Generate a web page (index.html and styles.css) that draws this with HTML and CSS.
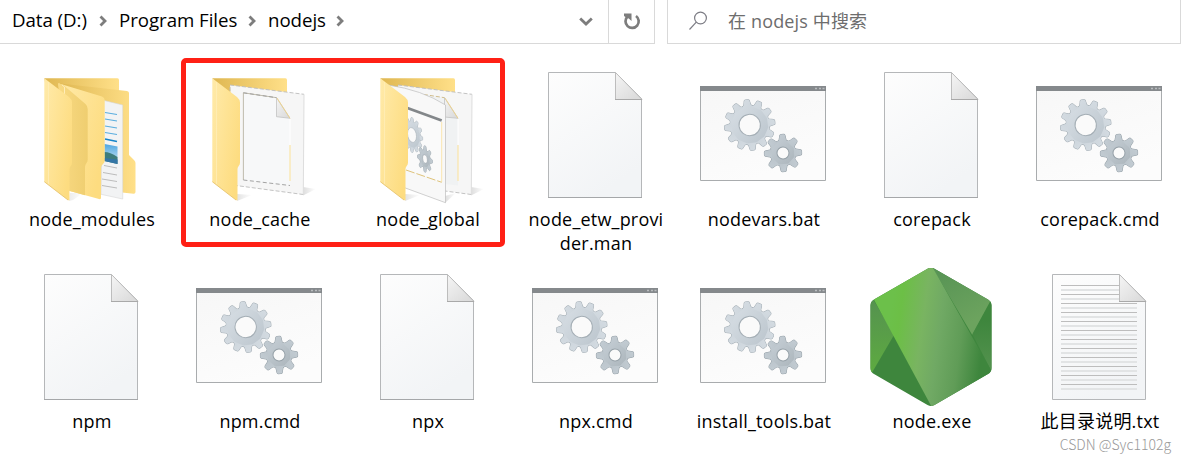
FILE: index.html
```html
<!DOCTYPE html>
<html lang="zh-CN">
<head>
    <meta charset="UTF-8">
    <meta name="viewport" content="width=device-width, initial-scale=1.0">
    <title>nodejs</title>
    <link rel="stylesheet" href="styles.css">
</head>
<body>

    <!-- shared icons -->
    <svg class="defs" width="0" height="0">
        <defs>
            <linearGradient id="paper" x1="0" y1="0" x2="0.5" y2="1">
                <stop offset="0" stop-color="#fdfdfd"/>
                <stop offset="1" stop-color="#f2f4f6"/>
            </linearGradient>
            <linearGradient id="fold" x1="0" y1="0.2" x2="0.7" y2="1">
                <stop offset="0" stop-color="#f2f2f2"/>
                <stop offset="1" stop-color="#dcdcdc"/>
            </linearGradient>
            <linearGradient id="win" x1="0" y1="0" x2="0.4" y2="1">
                <stop offset="0" stop-color="#f7f7f7"/>
                <stop offset="1" stop-color="#fcfcfc"/>
            </linearGradient>
            <linearGradient id="metal" gradientUnits="userSpaceOnUse" x1="-20" y1="-20" x2="20" y2="20">
                <stop offset="0" stop-color="#d8dfe5"/>
                <stop offset="1" stop-color="#bac4cc"/>
            </linearGradient>
            <linearGradient id="metalDark" gradientUnits="userSpaceOnUse" x1="-14" y1="-14" x2="14" y2="14">
                <stop offset="0" stop-color="#c6cfd6"/>
                <stop offset="1" stop-color="#a9b3b9"/>
            </linearGradient>
            <linearGradient id="cover" x1="0" y1="0" x2="1" y2="0.6">
                <stop offset="0" stop-color="#ffeaa9"/>
                <stop offset="1" stop-color="#fddc80"/>
            </linearGradient>
            <linearGradient id="back" x1="0" y1="0" x2="1" y2="0">
                <stop offset="0" stop-color="#dfb751"/>
                <stop offset="1" stop-color="#ffe089"/>
            </linearGradient>
            <linearGradient id="inner" x1="0" y1="0" x2="1" y2="0">
                <stop offset="0" stop-color="#f9da84"/>
                <stop offset="1" stop-color="#efce70"/>
            </linearGradient>
            <linearGradient id="sky" x1="0" y1="0" x2="0" y2="1">
                <stop offset="0" stop-color="#4ea6e0"/>
                <stop offset="1" stop-color="#d7ecf6"/>
            </linearGradient>
            <linearGradient id="shade" x1="0" y1="0" x2="1" y2="0">
                <stop offset="0" stop-color="#cfcfcf"/>
                <stop offset="1" stop-color="#fff"/>
            </linearGradient>
            <linearGradient id="band" gradientUnits="userSpaceOnUse" x1="26" y1="62" x2="143" y2="78">
                <stop offset="0.12" stop-color="#6cc04a"/>
                <stop offset="0.2" stop-color="#6cbf46"/>
                <stop offset="0.4" stop-color="#79b461"/>
                <stop offset="0.55" stop-color="#70a964"/>
                <stop offset="0.74" stop-color="#609c57"/>
                <stop offset="0.93" stop-color="#3e863d"/>
            </linearGradient>
            <linearGradient id="hexLeft" x1="0" y1="0" x2="0" y2="1">
                <stop offset="0.1" stop-color="#55934f"/>
                <stop offset="0.9" stop-color="#5da941"/>
            </linearGradient>
            <linearGradient id="hexTop" x1="0" y1="0" x2="0.5" y2="1">
                <stop offset="0.1" stop-color="#589455"/>
                <stop offset="0.9" stop-color="#6ca35e"/>
            </linearGradient>
            <linearGradient id="hexRight" x1="0" y1="0" x2="0" y2="1">
                <stop offset="0.3" stop-color="#3e863d"/>
                <stop offset="1" stop-color="#55934f"/>
            </linearGradient>
            <clipPath id="hex">
                <path d="M79.5 0.7Q83 -1.3 86.500 0.7L140 31.500Q143.500 33.500 143.500 37.500V100Q143.500 104 140 106L86.500 137Q83 139 79.500 137L26 106Q22.500 104 22.500 100V37.500Q22.500 33.500 26 31.500Z"/>
            </clipPath>

            <path id="tooth" d="M-5.800 -18L-3.500 -20L-2.600 -24.300Q-2.300 -25.300 -1.300 -25.300H1.300Q2.300 -25.300 2.600 -24.300L3.500 -20L5.800 -18Z"/>
            <g id="bigGear">
                <circle r="19.300"/>
                <use href="#tooth"/>
                <use href="#tooth" transform="rotate(30)"/>
                <use href="#tooth" transform="rotate(60)"/>
                <use href="#tooth" transform="rotate(90)"/>
                <use href="#tooth" transform="rotate(120)"/>
                <use href="#tooth" transform="rotate(150)"/>
                <use href="#tooth" transform="rotate(180)"/>
                <use href="#tooth" transform="rotate(210)"/>
                <use href="#tooth" transform="rotate(240)"/>
                <use href="#tooth" transform="rotate(270)"/>
                <use href="#tooth" transform="rotate(300)"/>
                <use href="#tooth" transform="rotate(330)"/>
            </g>
            <path id="smallTooth" d="M-5.500 -11L-3.500 -13L-2.600 -17.600Q-2.300 -18.600 -1.300 -18.600H1.300Q2.300 -18.600 2.600 -17.600L3.500 -13L5.500 -11Z"/>
            <g id="smallGear">
                <circle r="12.500"/>
                <use href="#smallTooth"/>
                <use href="#smallTooth" transform="rotate(45)"/>
                <use href="#smallTooth" transform="rotate(90)"/>
                <use href="#smallTooth" transform="rotate(135)"/>
                <use href="#smallTooth" transform="rotate(180)"/>
                <use href="#smallTooth" transform="rotate(225)"/>
                <use href="#smallTooth" transform="rotate(270)"/>
                <use href="#smallTooth" transform="rotate(315)"/>
            </g>
            <g id="gearA">
                <use href="#bigGear" fill="#9fa9b0" stroke="#a4aeb5" stroke-width="1"/>
                <use href="#bigGear" fill="url(#metal)"/>
                <circle r="10.700" fill="#fafafa" stroke="#a4aeb5"/>
            </g>
            <g id="gearB">
                <use href="#smallGear" fill="#9fa9b0" stroke="#96a1a8" stroke-width="1"/>
                <use href="#smallGear" fill="url(#metalDark)"/>
                <circle r="6" fill="#fafafa" stroke="#96a1a8"/>
            </g>

            <symbol id="file" viewBox="0 0 168 140">
                <path d="M36.500 6.500H103.500L129.500 32.500V131.500H36.500Z" fill="url(#paper)" stroke="#b5b7b9"/>
                <path d="M36 131.500H130" stroke="#a5a7a9"/>
                <path d="M103.500 6.500V33.500H130Z" fill="url(#fold)" stroke="#bdbdbd"/>
                <path d="M103 33.500H130" stroke="#a9a9a9"/>
            </symbol>

            <symbol id="script" viewBox="0 0 168 140">
                <path d="M20.500 20.500H145.500V114.500H20.500Z" fill="url(#win)" stroke="#a9acae"/>
                <path d="M20 20H146V25H20Z" fill="#85898c"/>
                <path d="M135 22.500H137M139 22.500H141M142.500 22.500H144.500" stroke="#b9bcbe" stroke-width="1.500"/>
                <use href="#gearA" transform="translate(69.700 59) rotate(-7)"/>
                <use href="#gearB" transform="translate(103 87) rotate(-2)"/>
            </symbol>

            <g id="folderCover">
                <path d="M36.300 12.300L61 31Q64 33.500 64 36.500V96.500Q64 98.500 62.700 100Q61.500 101.500 61.500 103V133.500Q61.500 135 60 134L36.300 115.700Z" fill="url(#cover)"/>
                <path d="M40.500 16V118.500" stroke="#ffedb8" stroke-width="0.800"/>
                <path d="M36.300 115.700L60 134" stroke="#e3bf67" stroke-width="0.800"/>
            </g>
        </defs>
    </svg>

    <header class="toolbar">
        <div class="address">
            <span class="crumb">Data (D:)</span>
            <svg class="arrow" width="8" height="12" viewBox="0 0 8 12"><path d="M1.500 1.500L6 6L1.500 10.500"/></svg>
            <span class="crumb crumb-parent">Program Files</span>
            <svg class="arrow" width="8" height="12" viewBox="0 0 8 12"><path d="M1.500 1.500L6 6L1.500 10.500"/></svg>
            <span class="crumb crumb-current">nodejs</span>
            <svg class="arrow" width="8" height="12" viewBox="0 0 8 12"><path d="M1.500 1.500L6 6L1.500 10.500"/></svg>
            <svg class="arrow dropdown" width="14" height="10" viewBox="0 0 14 10"><path d="M1.200 2.500L7 8L12.800 2.500"/></svg>
        </div>
        <div class="refresh">
            <svg width="18" height="18" viewBox="0 0 18 18">
                <path d="M13 4A6.600 6.600 0 1 1 4.600 4.500" fill="none" stroke="#7d7d7d" stroke-width="2.700"/>
                <path d="M1 1.500H8.500V9L5.800 6.500L3.500 5.800L1 4Z" fill="#7d7d7d"/>
            </svg>
        </div>
        <div class="search">
            <svg width="20" height="20" viewBox="0 0 20 20" fill="none" stroke="#7c7c84" stroke-width="1.200">
                <circle cx="12.500" cy="7" r="5.900"/>
                <path d="M8.300 11.200L1.500 18.500"/>
            </svg>
            <span class="search-text">在 nodejs 中搜索</span>
        </div>
    </header>

    <main class="files">
        <div class="item">
            <svg class="icon" viewBox="0 0 168 140">
                <path d="M36.300 12.300H109.500Q111 12.300 111 14V90H50Z" fill="url(#back)"/>
                <path d="M50 17.300L119 25Q121 25.300 121 27V89L126 94Q127.500 95.500 127.500 97V126Q127.500 128 125.500 127.800L112 126.300L60 110Z" fill="url(#back)"/>
                <path d="M94 34L114.700 39V133L93 128.300Z" fill="#f2f3f4" stroke="#d6d6d6" stroke-width="0.600"/>
                <path d="M97 46.500L109 48.500M97 53L109 55M97 60L109 62M97 66.500L109 68.500" stroke="#5aaede" stroke-width="1.200"/>
                <path d="M97 73L109 75.500" stroke="#1684c8" stroke-width="1.700"/>
                <path d="M96.500 78L109.500 80.500V98L96.500 95Z" fill="url(#sky)"/>
                <path d="M96.500 86Q102 86 109.500 91V98L96.500 95Z" fill="#3e7d7c"/>
                <path d="M96.500 92L109.500 93.500V98L96.500 95Z" fill="#3475a5"/>
                <path d="M96 99.500L109 102M95 106.500L109 109M94 113L109 115.500M94 119.500L109 122" stroke="#b5b5b5" stroke-width="0.900"/>
                <path d="M62 127H75L65 134L61 135Z" fill="url(#shade)" opacity="0.4"/>
                <path d="M50.300 17.300L94 30.500Q96.700 31.500 96.700 34V95Q96.700 96.500 95 98Q93 99.500 93 101.500V132Q93 133.500 91 133L60 124.500Z" fill="url(#cover)"/>
                <path d="M50.300 17.300L55 18.700L77.500 38Q79.700 40 79.700 43V93.500Q79.700 95.500 78.500 97Q77 99 77 101V129.300L60 124.500Z" fill="url(#inner)"/>
                <path d="M54 19L56.500 21V30" fill="none" stroke="#ffedb8"/>
                <use href="#folderCover"/>
            </svg>
            <span class="name">node_modules</span>
        </div>
        <div class="item">
            <svg class="icon" viewBox="0 0 168 140">
                <path d="M127 121L140 123L127 129.500Z" fill="url(#shade)" opacity="0.700"/>
                <path d="M61 128L76 129L61 135Z" fill="url(#shade)" opacity="0.600"/>
                <path d="M36.300 12.300H109.500Q111 12.300 111 14V50H60Z" fill="url(#back)"/>
                <path d="M54 19L128 28.300L127.300 128.500L60 119.500Z" fill="#f6f6f6"/>
                <path d="M54 31V19L128 28.300M127.300 128.500L60 119.500" fill="none" stroke="#bcbcbc" stroke-width="0.900" stroke-dasharray="4 2"/>
                <path d="M128 28.300L127.300 128.500" stroke="#dedede"/>
                <path d="M67.400 26.800L100.500 31.700L114 52.300V119.500L67.400 114Z" fill="#f7f8f9"/>
                <path d="M67.400 114V26.800L100.500 31.700" fill="none" stroke="#b9b4a4" stroke-width="0.900"/>
                <path d="M67.400 26.800L100.500 31.700M67.400 114L114 119.500" fill="none" stroke="#999" stroke-width="0.900" stroke-dasharray="4 2.500"/>
                <path d="M114 52.300V79" stroke="#fff"/>
                <path d="M114 79V115" stroke="#fbe3a0" stroke-width="1.100"/>
                <path d="M100.500 31.700V50.700L114 52.300Z" fill="url(#fold)" stroke="#bbb" stroke-width="0.700"/>
                <path d="M101 32L114 52.300" stroke="#efd387" stroke-width="0.900"/>
                <use href="#folderCover"/>
            </svg>
            <span class="name">node_cache</span>
        </div>
        <div class="item">
            <svg class="icon" viewBox="0 0 168 140">
                <path d="M127 121L140 123L127 129.500Z" fill="url(#shade)" opacity="0.700"/>
                <path d="M101 130L112 127L101 137Z" fill="url(#shade)" opacity="0.700"/>
                <path d="M61 128L76 129L61 135Z" fill="url(#shade)" opacity="0.600"/>
                <path d="M36.300 12.300H109.500Q111 12.300 111 14V50H60Z" fill="url(#back)"/>
                <path d="M54 19L128 28.300L127.300 128.500L60 119.500Z" fill="#f6f6f6"/>
                <path d="M54 19L128 28.300M127.300 128.500L101 125" fill="none" stroke="#bcbcbc" stroke-width="0.900" stroke-dasharray="4 2"/>
                <path d="M128 28.300L127.300 128.500" stroke="#dedede"/>
                <path d="M80 28.500L100.500 31.700L114 52.300V119.500L101 118Z" fill="#f0f2f3"/>
                <path d="M80 28.500L100.500 31.700" stroke="#cdb780" stroke-width="0.900" stroke-dasharray="4 2"/>
                <path d="M114 52.300V79" stroke="#fff"/>
                <path d="M114 79V115" stroke="#fbe3a0" stroke-width="1.100"/>
                <path d="M100.500 31.700V51L114 52.300Z" fill="url(#fold)" stroke="#bbb" stroke-width="0.700"/>
                <path d="M101 32L114 52.300" stroke="#efd387" stroke-width="0.900"/>
                <path d="M44.300 19Q78 24 101.500 39V136.700L60 121.500Z" fill="#f8f8f8" stroke="#bdbdbd" stroke-width="0.700"/>
                <path d="M62 40.500L97.700 53.500V116L62 104Z" fill="#fafafa"/>
                <path d="M62 41.500L97.700 54.500" stroke="#83878a" stroke-width="2.800"/>
                <path d="M97.700 56V116" stroke="#fae3a5" stroke-width="0.900"/>
                <path d="M62 104L97.700 116.300" stroke="#dfc37b" stroke-width="1" stroke-dasharray="9 2"/>
                <use href="#gearA" transform="matrix(0.420 0.140 0 0.680 68 69)"/>
                <use href="#gearB" transform="matrix(0.400 0.140 0 0.700 81 93)"/>
                <use href="#folderCover"/>
            </svg>
            <span class="name">node_global</span>
        </div>
        <div class="item">
            <svg class="icon"><use href="#file"/></svg>
            <span class="name">node_etw_provi<br>der.man</span>
        </div>
        <div class="item">
            <svg class="icon"><use href="#script"/></svg>
            <span class="name">nodevars.bat</span>
        </div>
        <div class="item">
            <svg class="icon"><use href="#file"/></svg>
            <span class="name">corepack</span>
        </div>
        <div class="item">
            <svg class="icon"><use href="#script"/></svg>
            <span class="name">corepack.cmd</span>
        </div>

        <div class="item">
            <svg class="icon"><use href="#file"/></svg>
            <span class="name">npm</span>
        </div>
        <div class="item">
            <svg class="icon"><use href="#script"/></svg>
            <span class="name">npm.cmd</span>
        </div>
        <div class="item">
            <svg class="icon"><use href="#file"/></svg>
            <span class="name">npx</span>
        </div>
        <div class="item">
            <svg class="icon"><use href="#script"/></svg>
            <span class="name">npx.cmd</span>
        </div>
        <div class="item">
            <svg class="icon"><use href="#script"/></svg>
            <span class="name">install_tools.bat</span>
        </div>
        <div class="item">
            <svg class="icon" viewBox="0 0 168 140">
                <g clip-path="url(#hex)">
                    <path d="M22 -1H144V139H22Z" fill="#3e863d"/>
                    <path d="M22 26L46 67L22 108Z" fill="url(#hexLeft)"/>
                    <path d="M84 -1L146 28L124.300 67Z" fill="url(#hexTop)"/>
                    <path d="M144 30L124.300 66.300L144 104Z" fill="url(#hexRight)"/>
                    <path d="M24 28L83 -3L85 0L144 104V106L84 139.500Z" fill="url(#band)"/>
                </g>
            </svg>
            <span class="name">node.exe</span>
        </div>
        <div class="item">
            <svg class="icon" viewBox="0 0 168 140">
                <path d="M36.500 6.500H103.500L129.500 32.500V131.500H36.500Z" fill="url(#paper)" stroke="#b5b7b9"/>
                <path d="M45 17.500H103M45 26.500H103M45 35.500H121M45 44.500H121M45 53.500H121M45 62.500H121M45 71.500H121M45 80.500H121M45 89.500H121M45 98.500H121M45 107.500H121M45 116.500H121" stroke="#bdbdbd"/>
                <path d="M45 22H103M45 31H103M45 40H121M45 49H121M45 58H121M45 67H121M45 76H121M45 85H121M45 94H121M45 103H121M45 112H121M45 121H121" stroke="#e2e4e5" stroke-width="2"/>
                <path d="M103.500 6.500V33.500H130Z" fill="url(#fold)" stroke="#bdbdbd"/>
                <path d="M103 33.500H130" stroke="#a9a9a9"/>
            </svg>
            <span class="name">此目录说明.txt</span>
        </div>

        <div class="highlight"></div>
    </main>

    <div class="watermark">CSDN @Syc1102g</div>

</body>
</html>
```
FILE: styles.css
```css
* {
    box-sizing: border-box;
}

body {
    margin: 0;
    height: 461px;
    position: relative;
    overflow: hidden;
    background-color: #fff;
    color: #000;
    font-family: "Open Sans", "Noto Sans CJK SC", sans-serif;
    font-size: 18px;
}

.defs {
    display: block;
}

.toolbar {
    display: flex;
    height: 44px;
    white-space: nowrap;
}

.address,
.refresh,
.search {
    display: flex;
    align-items: center;
    border-bottom: 1px solid #d9d9d9;
    padding-bottom: 2px;
}

.address {
    width: 608px;
    padding-left: 12px;
}

.crumb {
    width: 76px;
    margin-right: 11px;
    padding-bottom: 2px;
    font-size: 18.7px;
    letter-spacing: -0.05px;
}

.crumb-parent {
    width: 118px;
}

.crumb-current {
    width: 57px;
}

.arrow {
    margin-right: 12px;
    fill: none;
    stroke: #7d7d7d;
    stroke-width: 2.8;
}

.dropdown {
    margin-left: auto;
    margin-right: 15px;
}

.refresh {
    width: 47px;
    justify-content: center;
    border-left: 1px solid #d9d9d9;
    border-right: 1px solid #d9d9d9;
}

.search {
    width: 514px;
    margin-left: 12px;
    padding-left: 20px;
    border-left: 1px solid #d9d9d9;
    border-right: 1px solid #d9d9d9;
}

.search-text {
    margin-left: 20px;
    padding-bottom: 1px;
    color: #6d6d6d;
    letter-spacing: 0.15px;
}

.files {
    position: relative;
    display: grid;
    grid-template-columns: repeat(7, 168px);
    grid-auto-rows: 202px;
    padding: 22px 0 0 8px;
}

.item {
    text-align: center;
}

.icon {
    display: block;
    width: 168px;
    height: 140px;
}

.name {
    display: block;
    margin-top: 1px;
    line-height: 24px;
    letter-spacing: 0.2px;
}

.highlight {
    position: absolute;
    left: 181px;
    top: 14px;
    width: 324px;
    height: 189px;
    border: 5px solid #ff2015;
    border-radius: 5px;
}

.watermark {
    position: absolute;
    right: 15px;
    bottom: 7px;
    font-family: "Noto Sans CJK SC", sans-serif;
    font-size: 14px;
    font-weight: 300;
    line-height: 20px;
    color: #999;
}
```
